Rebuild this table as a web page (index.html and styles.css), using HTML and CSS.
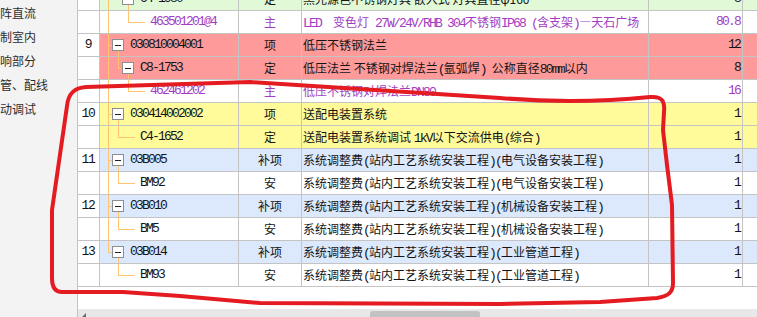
FILE: index.html
```html
<!DOCTYPE html>
<html lang="zh">
<head>
<meta charset="utf-8">
<title>清单</title>
<link rel="stylesheet" href="styles.css">
</head>
<body>
<div class="app">
  <aside class="side">
    <div class="side-list">
      <div class="side-item">阵直流</div>
      <div class="side-item">制室内</div>
      <div class="side-item">响部分</div>
      <div class="side-item">管、配线</div>
      <div class="side-item">动调试</div>
    </div>
  </aside>
  <main class="pane">
    <div class="view">
      <div class="grid">
        <div class="row green">
          <div class="c num"></div>
          <div class="c code"><i class="ln t-full"></i><i class="ln v2-down"></i><span class="box l2"></span><span class="mono txt">C4-1980</span></div>
          <div class="c type">定</div>
          <div class="c desc">黑光源色不锈钢灯具 嵌入式 灯具直径φ160</div>
          <div class="c qty mono">8</div>
          <div class="c end"></div>
        </div>
        <div class="row white">
          <div class="c num"></div>
          <div class="c code"><i class="ln t-full"></i><i class="ln v2-up"></i><i class="ln h2-leaf"></i><span class="mono leaf3 p">463501201@4</span></div>
          <div class="c type p">主</div>
          <div class="c desc p"><span class="mono">LED  </span>变色灯<span class="mono"> 27W/24V/RHB 304</span>不锈钢<span class="mono">IP68 (</span>含支架<span class="mono">)</span>—天石广场</div>
          <div class="c qty mono p">80.8</div>
          <div class="c end"></div>
        </div>
        <div class="row red">
          <div class="c num mono">9</div>
          <div class="c code"><i class="ln t-full"></i><i class="ln h0"></i><i class="ln v1-down"></i><span class="box l1"></span><span class="mono txt">030810004001</span></div>
          <div class="c type">项</div>
          <div class="c desc">低压不锈钢法兰</div>
          <div class="c qty mono">12</div>
          <div class="c end"></div>
        </div>
        <div class="row red">
          <div class="c num"></div>
          <div class="c code"><i class="ln t-full"></i><i class="ln v1-up"></i><i class="ln h1-box"></i><i class="ln v2-down"></i><span class="box l2"></span><span class="mono txt">C8-1753</span></div>
          <div class="c type">定</div>
          <div class="c desc">低压法兰 不锈钢对焊法兰<span class="mono">(</span>氩弧焊<span class="mono">) </span>公称直径<span class="mono">80mm</span>以内</div>
          <div class="c qty mono">8</div>
          <div class="c end"></div>
        </div>
        <div class="row white">
          <div class="c num"></div>
          <div class="c code"><i class="ln t-full"></i><i class="ln v2-up"></i><i class="ln h2-leaf"></i><span class="mono leaf3 p">462461202</span></div>
          <div class="c type p">主</div>
          <div class="c desc p">低压不锈钢对焊法兰<span class="mono">DN80</span></div>
          <div class="c qty mono p">16</div>
          <div class="c end"></div>
        </div>
        <div class="row yellow">
          <div class="c num mono">10</div>
          <div class="c code"><i class="ln t-full"></i><i class="ln h0"></i><i class="ln v1-down"></i><span class="box l1"></span><span class="mono txt">030414002002</span></div>
          <div class="c type">项</div>
          <div class="c desc">送配电装置系统</div>
          <div class="c qty mono">1</div>
          <div class="c end"></div>
        </div>
        <div class="row yellow">
          <div class="c num"></div>
          <div class="c code"><i class="ln t-full"></i><i class="ln v1-up"></i><i class="ln h1-leaf"></i><span class="mono leaf2">C4-1652</span></div>
          <div class="c type">定</div>
          <div class="c desc">送配电装置系统调试 <span class="mono">1kV</span>以下交流供电<span class="mono">(</span>综合<span class="mono">)</span></div>
          <div class="c qty mono">1</div>
          <div class="c end"></div>
        </div>
        <div class="row blue">
          <div class="c num mono">11</div>
          <div class="c code"><i class="ln t-full"></i><i class="ln h0"></i><i class="ln v1-down"></i><span class="box l1"></span><span class="mono txt">03B005</span></div>
          <div class="c type">补项</div>
          <div class="c desc">系统调整费<span class="mono">(</span>站内工艺系统安装工程<span class="mono">)(</span>电气设备安装工程<span class="mono">)</span></div>
          <div class="c qty mono">1</div>
          <div class="c end"></div>
        </div>
        <div class="row white">
          <div class="c num"></div>
          <div class="c code"><i class="ln t-full"></i><i class="ln v1-up"></i><i class="ln h1-leaf"></i><span class="mono leaf2">BM92</span></div>
          <div class="c type">安</div>
          <div class="c desc">系统调整费<span class="mono">(</span>站内工艺系统安装工程<span class="mono">)(</span>电气设备安装工程<span class="mono">)</span></div>
          <div class="c qty mono">1</div>
          <div class="c end"></div>
        </div>
        <div class="row blue">
          <div class="c num mono">12</div>
          <div class="c code"><i class="ln t-full"></i><i class="ln h0"></i><i class="ln v1-down"></i><span class="box l1"></span><span class="mono txt">03B010</span></div>
          <div class="c type">补项</div>
          <div class="c desc">系统调整费<span class="mono">(</span>站内工艺系统安装工程<span class="mono">)(</span>机械设备安装工程<span class="mono">)</span></div>
          <div class="c qty mono">1</div>
          <div class="c end"></div>
        </div>
        <div class="row white">
          <div class="c num"></div>
          <div class="c code"><i class="ln t-full"></i><i class="ln v1-up"></i><i class="ln h1-leaf"></i><span class="mono leaf2">BM5</span></div>
          <div class="c type">安</div>
          <div class="c desc">系统调整费<span class="mono">(</span>站内工艺系统安装工程<span class="mono">)(</span>机械设备安装工程<span class="mono">)</span></div>
          <div class="c qty mono">1</div>
          <div class="c end"></div>
        </div>
        <div class="row blue">
          <div class="c num mono">13</div>
          <div class="c code"><i class="ln t-half"></i><i class="ln h0"></i><i class="ln v1-down"></i><span class="box l1"></span><span class="mono txt">03B014</span></div>
          <div class="c type">补项</div>
          <div class="c desc">系统调整费<span class="mono">(</span>站内工艺系统安装工程<span class="mono">)(</span>工业管道工程<span class="mono">)</span></div>
          <div class="c qty mono">1</div>
          <div class="c end"></div>
        </div>
        <div class="row white">
          <div class="c num"></div>
          <div class="c code"><i class="ln v1-up"></i><i class="ln h1-leaf"></i><span class="mono leaf2">BM93</span></div>
          <div class="c type">安</div>
          <div class="c desc">系统调整费<span class="mono">(</span>站内工艺系统安装工程<span class="mono">)(</span>工业管道工程<span class="mono">)</span></div>
          <div class="c qty mono">1</div>
          <div class="c end"></div>
        </div>
      </div>
    </div>
    <div class="hscroll"><span class="arrow"></span><span class="thumb"></span></div>
  </main>
  <svg class="ink" width="757" height="317" viewBox="0 0 757 317">
    <path d="M 67 106 C 68 95 73 88 86 87 L 250 82 L 500 98 C 560 103 610 101 650 97 C 662 96 665 101 664 112 L 663 130 L 667 165 L 672 205 L 673 283 C 673 292 669 296 657 298 L 600 302 L 500 304 L 260 303 L 180 296 L 123 292 L 62 292 C 55 292 52 287 52 278 L 52 210 L 67 106" />
  </svg>
</div>
</body>
</html>
```

FILE: styles.css
```css
html, body {
  margin: 0;
  padding: 0;
}

body {
  width: 757px;
  height: 317px;
  overflow: hidden;
  background: #ffffff;
  font-family: "Noto Sans CJK SC", "Noto Sans", sans-serif;
  color: #141414;
}

.app {
  position: relative;
  display: flex;
  width: 757px;
  height: 317px;
}

/* left tree panel (scrolled horizontally) */
.side {
  width: 77px;
  flex: none;
  background: #f3f3f3;
  overflow: hidden;
}

.side-list {
  padding-top: 1px;
}

.side-item {
  font-size: 12px;
  line-height: 24px;
  color: #2e2e2e;
  white-space: nowrap;
}

/* right grid panel */
.pane {
  flex: 1;
  min-width: 0;
  display: flex;
  flex-direction: column;
  border-left: 1px solid #c4c4c4;
}

.view {
  height: 309px;
  flex: none;
  overflow: hidden;
}

.grid {
  margin-top: -12px;
}

.row {
  display: grid;
  grid-template-columns: 22px 139px 63px 347px 94px 1fr;
  height: 23px;
}

.row.green { background: #e2f9d8; }
.row.white { background: #ffffff; }
.row.red { background: #ff9a9a; }
.row.yellow { background: #fffb9b; }
.row.blue { background: #dce8fb; }

.c {
  box-sizing: border-box;
  height: 23px;
  border-right: 1px solid #c4c4c4;
  border-bottom: 1px solid #c4c4c4;
  line-height: 22px;
  font-size: 12px;
  white-space: pre;
  overflow: hidden;
}

.c.end {
  border-right: none;
}

.num {
  background: #ffffff;
  text-align: center;
}

.type {
  text-align: center;
}

.desc {
  padding-left: 1px;
}

.qty {
  text-align: right;
  padding-right: 2px;
}

.mono {
  font-family: "Liberation Mono", monospace;
  font-size: 13px;
  letter-spacing: -1.8px;
}

.num.mono {
  letter-spacing: -1.2px;
  text-indent: -1px;
}

.p {
  color: #a23dc3;
}

/* tree column */
.code {
  position: relative;
  display: flex;
  align-items: center;
}

.ln {
  position: absolute;
  background: #ffc470;
}

.t-full { left: 8px; top: 0; bottom: 0; width: 1px; }
.t-half { left: 8px; top: 0; height: 11px; width: 1px; }
.h0 { left: 8px; top: 11px; width: 4px; height: 1px; }
.v1-up { left: 18px; top: 0; height: 11px; width: 1px; }
.h1-box { left: 18px; top: 11px; width: 4px; height: 1px; }
.h1-leaf { left: 18px; top: 11px; width: 17px; height: 1px; }
.v1-down { left: 18px; top: 17px; bottom: 0; width: 1px; }
.v2-up { left: 28px; top: 0; height: 11px; width: 1px; }
.h2-leaf { left: 28px; top: 11px; width: 17px; height: 1px; }
.v2-down { left: 28px; top: 17px; bottom: 0; width: 1px; }

.box {
  position: relative;
  z-index: 1;
  box-sizing: border-box;
  width: 12px;
  height: 12px;
  flex: none;
  border: 1px solid #8e8e8e;
  background: #ffffff;
}

.box::after {
  content: "";
  position: absolute;
  left: 2px;
  top: 5px;
  width: 6px;
  height: 1px;
  background: #222222;
}

.box.l1 { margin-left: 12px; }
.box.l2 { margin-left: 22px; }

.txt { margin-left: 6px; }
.leaf2 { margin-left: 40px; }
.leaf3 { margin-left: 50px; }

/* horizontal scrollbar */
.hscroll {
  height: 8px;
  flex: none;
  background: #e8e8e8;
  display: flex;
  align-items: flex-end;
}

.arrow {
  width: 0;
  height: 0;
  margin-left: 4px;
  border-left: 4px solid transparent;
  border-bottom: 4px solid #6a6a6a;
}

.thumb {
  margin-left: 284px;
  width: 110px;
  height: 6px;
  background: #c2c2c2;
  border-radius: 3px 3px 0 0;
}

/* red freehand annotation over the grid */
.ink {
  position: absolute;
  left: 0;
  top: 0;
  pointer-events: none;
}

.ink path {
  fill: none;
  stroke: #e41b21;
  stroke-width: 4;
  stroke-linecap: round;
  stroke-linejoin: round;
}
```
